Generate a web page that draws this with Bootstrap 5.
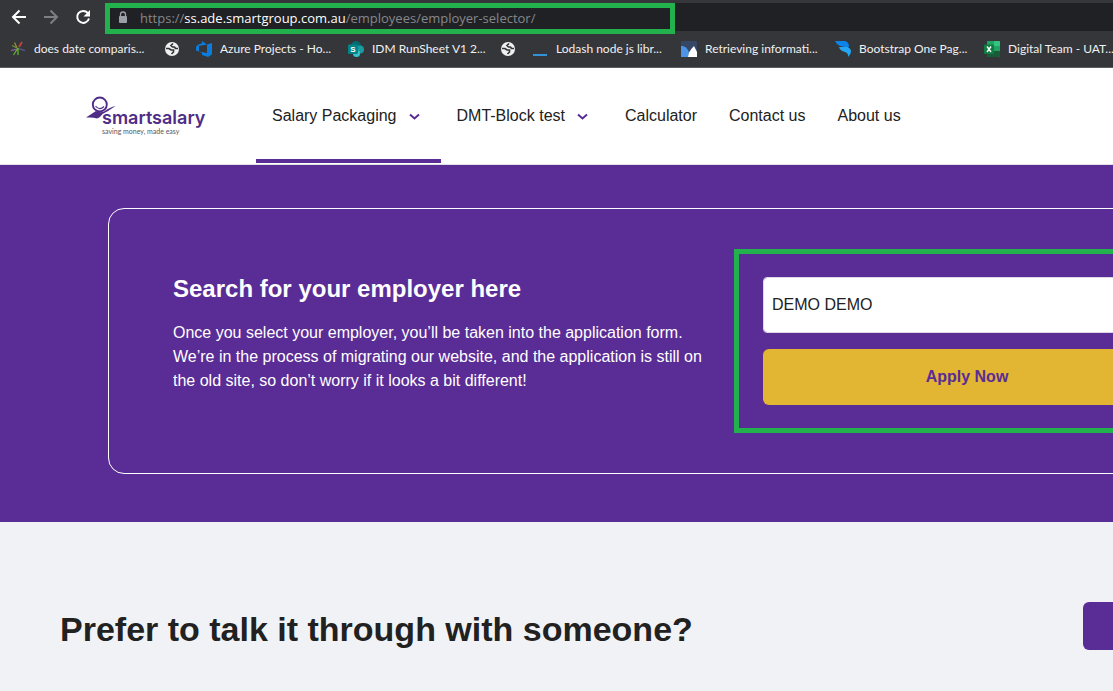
<!DOCTYPE html>
<html lang="en">
<head>
<meta charset="utf-8">
<meta name="viewport" content="width=device-width, initial-scale=1">
<title>Smartsalary – Employer selector</title>
<link href="https://cdn.jsdelivr.net/npm/bootstrap@5.3.0/dist/css/bootstrap.min.css" rel="stylesheet">
<style>
  :root { --brand: #5a2c96; --outline: #23b14d; --ink: #212121; }
  body { font-family: "Liberation Sans", Arial, sans-serif; color: var(--ink); background: #f1f2f6; overflow-x: hidden; }
  svg { display: block; flex-shrink: 0; }

  /* browser chrome */
  .chrome { background: #35363a; border-bottom: 1px solid #5c5d61; font-family: "Open Sans", "Segoe UI", sans-serif; overflow: hidden; }
  .toolbar { padding: 3px 0 0 11px; }
  .tool-btn { width: 16px; height: 28px; }
  .omnibox { background: #202124; height: 28px; margin-left: 14px; }
  .address { width: 570px; height: 31px; border: 5px solid var(--outline); padding: 0 0 2px 8px; font-size: 13px; line-height: 18px; color: #85878b; background: #202124; position: relative; }
  .address b { font-weight: 400; color: #fff; }
  .bookmarks { display: grid; grid-template-columns: 154px 32px 152px 152px 32px 149px 154px 149px auto; height: 36px; padding-left: 10px; align-items: center; }
  .bookmarks a { color: #f1f1f1; font-family: Lato, "Segoe UI", sans-serif; font-size: 12px; line-height: 16px; }

  /* site header */
  .site-header { border-bottom: 1px solid #e1e1e3; padding-left: 80px; }
  .brand-link { width: 176px; padding-left: 4px; }
  .main-link { color: var(--ink); font-size: 16px; line-height: 24px; padding: 36px 16px 31px; border-bottom: 4px solid transparent; margin-bottom: 1px; }
  .main-link.current { border-bottom-color: var(--brand); }

  /* employer search */
  .search-band { background: var(--brand); padding: 43px 0 48px 108px; overflow: hidden; }
  .search-card { border: 1px solid #fff; border-radius: 16px; padding: 40px 36px 40px 64px; margin-right: -124px; grid-template-columns: minmax(0, 1fr) 466px; column-gap: 24px; color: #fff; }
  .search-card h2 { font-size: 24px; line-height: 32px; margin: 24px 0 16px; }
  .search-card p { font-size: 16px; line-height: 24px; }
  .form-outline { border: 5px solid var(--outline); padding: 23px 24px; gap: 16px; }
  .employer-field { height: 56px; border: 1px solid #ddd8e6; border-radius: 4px; padding: 0 8px; font-size: 16px; color: var(--ink); }
  .apply-btn { height: 56px; background: #e2b533; color: var(--brand); font-weight: 700; font-size: 16px; border: 0; border-radius: 6px; }
  .apply-btn:hover { background: #d2a523; color: var(--brand); }

  /* contact */
  .talk { padding: 80px 0 40px 60px; overflow: hidden; }
  .talk h2 { font-size: 34px; line-height: 54px; font-weight: 700; }
  .call-btn { width: 160px; height: 48px; background: var(--brand); border-radius: 6px; margin-right: -130px; }
</style>
</head>
<body>
<div class="chrome">
  <div class="toolbar d-flex align-items-start">
    <div class="d-flex gap-3">
      <button class="tool-btn btn p-0 border-0" aria-label="Back"><svg width="16" height="28" viewBox="0 0 16 28" fill="none" stroke="#fff" stroke-width="2"><path d="M15 14H2M8.500 7.500 2 14l6.500 6.500"/></svg></button>
      <button class="tool-btn btn p-0 border-0" aria-label="Forward"><svg width="16" height="28" viewBox="0 0 16 28" fill="none" stroke="#7e7f82" stroke-width="2"><path d="M1 14h13M7.500 7.500 14 14l-6.500 6.500"/></svg></button>
      <button class="tool-btn btn p-0 border-0" aria-label="Reload"><svg width="16" height="28" viewBox="0 0 16 28"><path d="M12.800 10A6 6 0 1 0 14 15.500" fill="none" stroke="#fff" stroke-width="2"/><path d="M15 7v6.500H8.500z" fill="#fff"/></svg></button>
    </div>
    <div class="omnibox flex-grow-1">
      <div class="address d-flex align-items-center" role="textbox" aria-label="Address">
        <svg width="10" height="14" viewBox="0 0 10 14" class="me-2"><path d="M2.500 6V3.500a2.500 2.500 0 0 1 5 0V6" fill="none" stroke="#9aa0a6" stroke-width="1.300"/><rect x="1" y="5" width="8" height="7" rx="1" fill="#9aa0a6"/></svg>
        <span class="ms-1 text-nowrap">https://<b>ss.ade.smartgroup.com.au</b>/employees/employer-selector/</span>
      </div>
    </div>
  </div>
  <nav class="bookmarks text-nowrap" aria-label="Bookmarks">
    <a href="#" class="d-flex gap-2 align-items-center text-decoration-none"><svg width="16" height="16" viewBox="0 0 16 16" fill="none" stroke-width="1.300"><path d="M7 7 4.500 1.500" stroke="#a08a3a"/><path d="M7 7 2 4.500" stroke="#6a9a2d"/><path d="m9 6 3-5" stroke="#d8403b" stroke-width="1.600"/><path d="M8 8 1 9.500" stroke="#7a5a9a"/><path d="M8 7.500l7 2" stroke="#6b5a9a"/><path d="M8 7 3.500 14M8 7v7" stroke="#63b32e"/></svg><span>does date comparis...</span></a>
    <a href="#" aria-label="Saved page"><svg width="16" height="16" viewBox="0 0 16 16"><circle cx="8" cy="8" r="7" fill="#f1f1f1"/><path d="M2 7.500h3l2 1.500h2.500v2L7.500 13M9 2.500 7 4.500l1.500 1.500h2l1 1.500H14" fill="none" stroke="#35363a" stroke-width="1.700"/></svg></a>
    <a href="#" class="d-flex gap-2 align-items-center text-decoration-none"><svg width="16" height="16" viewBox="0 0 16 16"><path d="M0 6 1.500 4 6 2.200V0l5 3.500L3 5v5.500L0 9.500zM3 10.500 11 12V3.500L16 2v11.500L12 16l-6-2v-2z" fill="#0b7bdc"/></svg><span>Azure Projects - Ho...</span></a>
    <a href="#" class="d-flex gap-2 align-items-center text-decoration-none"><svg width="16" height="16" viewBox="0 0 16 16"><circle cx="8" cy="5" r="5" fill="#036c70"/><circle cx="12" cy="8.500" r="4" fill="#1a9ba1"/><circle cx="8.500" cy="12.500" r="3.500" fill="#37c6d0"/><rect y="3.500" width="10" height="9.500" rx="1" fill="#038387"/><text x="2.200" y="11.300" font-family="Liberation Sans, sans-serif" font-size="8" font-weight="700" fill="#fff">S</text></svg><span>IDM RunSheet V1 2...</span></a>
    <a href="#" aria-label="Saved page"><svg width="16" height="16" viewBox="0 0 16 16"><circle cx="8" cy="8" r="7" fill="#f1f1f1"/><path d="M2 7.500h3l2 1.500h2.500v2L7.500 13M9 2.500 7 4.500l1.500 1.500h2l1 1.500H14" fill="none" stroke="#35363a" stroke-width="1.700"/></svg></a>
    <a href="#" class="d-flex gap-2 align-items-center text-decoration-none"><svg width="16" height="16" viewBox="0 0 16 16"><path d="M1 13h14v2H1z" fill="#3492d8"/></svg><span>Lodash node js libr...</span></a>
    <a href="#" class="d-flex gap-2 align-items-center text-decoration-none"><svg width="16" height="16" viewBox="0 0 16 16"><rect width="16" height="16" rx="1" fill="#354765"/><path d="M0 5q5-1 8 6l-1 5H0z" fill="#4b94e8"/><path d="M7 16q0-5 6-11l3 6v5z" fill="#fff"/></svg><span>Retrieving informati...</span></a>
    <a href="#" class="d-flex gap-2 align-items-center text-decoration-none"><svg width="16" height="16" viewBox="0 0 16 16"><path d="M0 0h10q4 1 4 5.500L12 8Q9 5 5 5 1 3 0 0z" fill="#0b83e8"/><path d="M4 6h8q4 1 4 4.500 0 3-3 5.500.500-4-3-5-5-1-6-5z" fill="#23a7f5"/></svg><span>Bootstrap One Pag...</span></a>
    <a href="#" class="d-flex gap-2 align-items-center text-decoration-none"><svg width="16" height="16" viewBox="0 0 16 16"><rect x="3" width="13" height="16" rx="1" fill="#21a366"/><path d="M10 0h5q1 0 1 1v4h-6z" fill="#33c481"/><path d="M3 5h7v5H3z" fill="#107c41"/><path d="M3 10h13v5q0 1-1 1H4q-1 0-1-1z" fill="#185c37"/><rect y="3.500" width="10" height="9.500" rx="1" fill="#107c41"/><path d="m3 5.500 4 5.500M7 5.500 3 11" stroke="#fff" stroke-width="1.400"/></svg><span>Digital Team - UAT...</span></a>
  </nav>
</div>

<header class="site-header bg-white d-flex align-items-center">
  <a class="brand-link" href="#" aria-label="smartsalary home">
    <svg width="128" height="44" viewBox="0 0 128 44">
      <circle cx="15.800" cy="10.500" r="7" fill="none" stroke="#4f2d87" stroke-width="1.900"/>
      <path d="M11.500 12q4 5 8.500.5" fill="none" stroke="#4f2d87" stroke-width="1.200"/>
      <path d="M2 23.500 12 17q4 2 8 .5 6-4.500 11.500-5.500-7 5-13 8-3 4-5.500 4.500-4-1.500-11-1z" fill="#4f2d87"/>
      <text x="18" y="30" font-family="Inter, sans-serif" font-weight="600" font-size="18" fill="#4f2d87">smartsalary</text>
      <text x="18" y="40" font-family="Lato, sans-serif" font-size="7" fill="#55565a">saving money, made easy</text>
    </svg>
  </a>
  <nav class="d-flex text-nowrap" aria-label="Main">
    <a class="main-link current d-flex align-items-center gap-2 text-decoration-none" href="#">Salary Packaging<svg width="20" height="20" viewBox="0 0 20 20"><path d="m5 8.500 4.500 4L14 8.500" fill="none" stroke="#5a2c96" stroke-width="2"/></svg></a>
    <a class="main-link d-flex align-items-center gap-2 text-decoration-none" href="#">DMT-Block test<svg width="20" height="20" viewBox="0 0 20 20"><path d="m5 8.500 4.500 4L14 8.500" fill="none" stroke="#5a2c96" stroke-width="2"/></svg></a>
    <a class="main-link text-decoration-none" href="#">Calculator</a>
    <a class="main-link text-decoration-none" href="#">Contact us</a>
    <a class="main-link text-decoration-none" href="#">About us</a>
  </nav>
</header>

<main>
  <section class="search-band">
    <div class="search-card d-grid">
      <div>
        <h2 class="fw-bold">Search for your employer here</h2>
        <p class="mb-0">Once you select your employer, you’ll be taken into the application form. We’re in the process of migrating our website, and the application is still on the old site, so don’t worry if it looks a bit different!</p>
      </div>
      <form class="form-outline d-flex flex-column">
        <input class="employer-field form-control" type="text" value="DEMO DEMO" aria-label="Employer name">
        <button class="apply-btn btn w-100" type="button">Apply Now</button>
      </form>
    </div>
  </section>
  <section class="talk d-flex justify-content-between align-items-start">
    <h2 class="mb-0">Prefer to talk it through with someone?</h2>
    <button class="call-btn btn" type="button" aria-label="Contact us"></button>
  </section>
</main>
<script src="https://cdn.jsdelivr.net/npm/bootstrap@5.3.0/dist/js/bootstrap.bundle.min.js"></script>
</body>
</html>
